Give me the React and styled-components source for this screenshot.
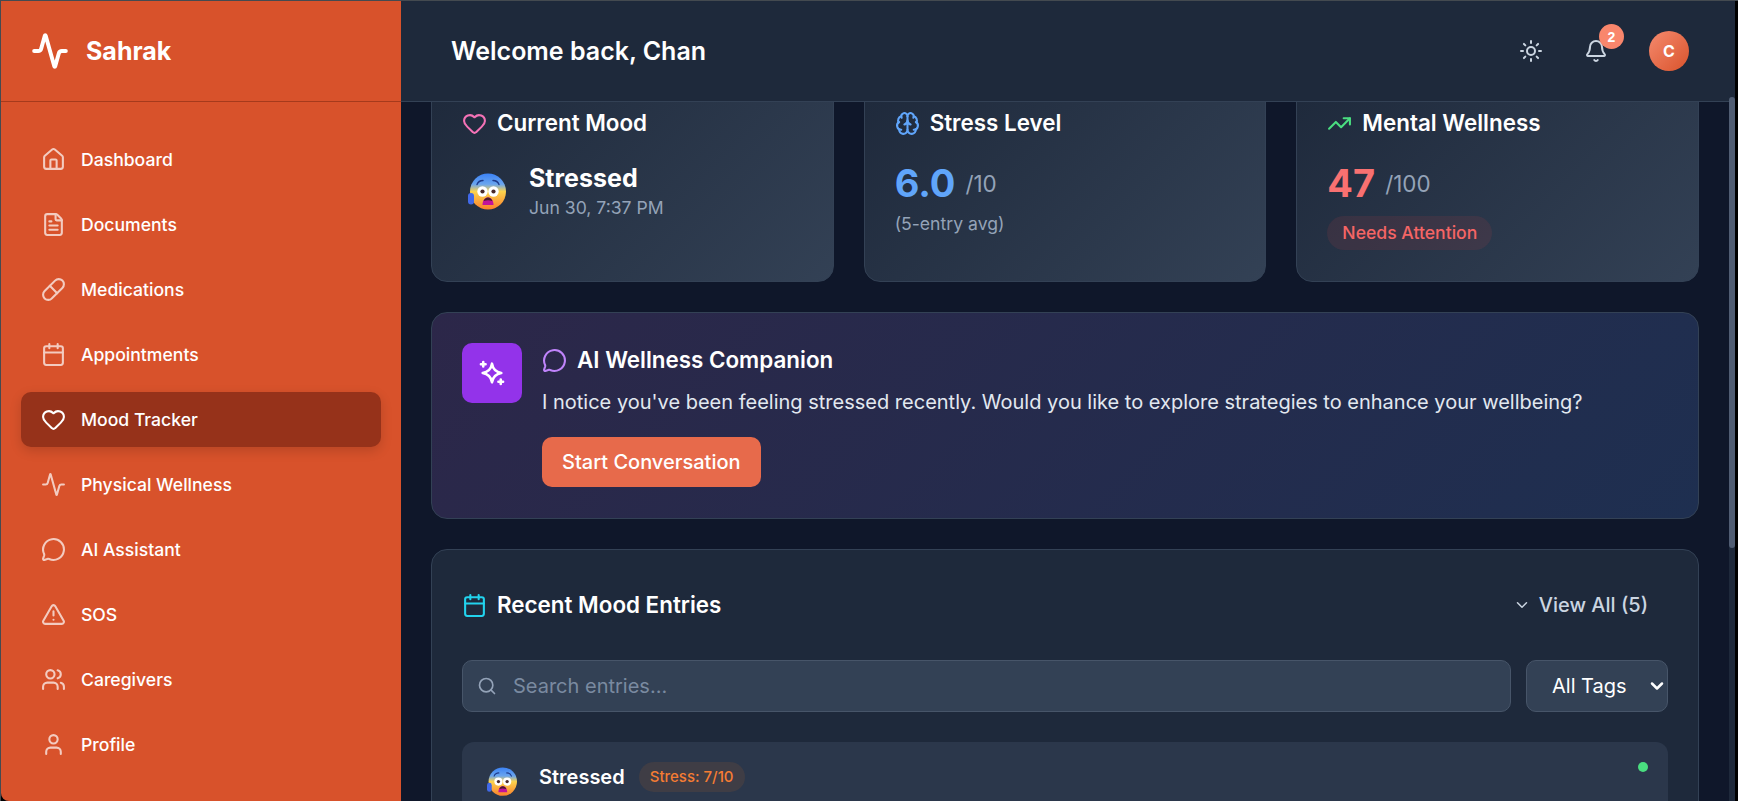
import React, { useLayoutEffect, useRef } from 'react';
import styled, { createGlobalStyle } from 'styled-components';
import {
  Activity, House, FileText, Pill, Calendar, Heart, MessageCircle, TriangleAlert,
  Users, User, Sun, Bell, Brain, TrendingUp, Search, ChevronDown,
} from 'lucide-react';

const GlobalStyle = createGlobalStyle`
  * { box-sizing: border-box; }
  html, body { margin: 0; height: 100%; overflow: hidden; background: #000; }
  body { font-family: Inter, "Noto Sans", sans-serif; color: #fff; }
`;

const Frame = styled.div`
  width: 1738px;
  height: 801px;
  padding-right: 3px;
  border-top: 1px solid #444a50;
  border-left: 1px solid #444a50;
  background: #000;
`;

const Shell = styled.div`
  display: flex;
  height: 800px;
  overflow: hidden;
  border-bottom-left-radius: 8px;
  background: #0f172a;
`;

const Sidebar = styled.aside`
  width: 400px;
  flex: none;
  background: #d8522b;
`;

const Brand = styled.div`
  display: flex;
  align-items: center;
  gap: 17px;
  height: 101px;
  padding: 0 30px;
  border-bottom: 1px solid #a63a1c;
  font-size: 25px;
  font-weight: 700;
`;

const Nav = styled.nav`
  display: flex;
  flex-direction: column;
  gap: 10px;
  padding: 30px 20px;
`;

const NavItem = styled.a`
  display: flex;
  align-items: center;
  gap: 15px;
  height: 55px;
  padding: 0 20px;
  border-radius: 10px;
  font-size: 17.6px;
  font-weight: 500;
  color: #fff;
  background: ${(p) => (p.$active ? '#96321a' : 'transparent')};
  box-shadow: ${(p) => (p.$active ? '0 4px 12px rgba(0,0,0,.15)' : 'none')};
  svg { opacity: ${(p) => (p.$active ? 1 : 0.7)}; flex: none; }
`;

const Column = styled.div`
  flex: 1;
  min-width: 0;
  height: 800px;
  overflow: hidden;
`;

const ScrollRail = styled.div`
  flex: none;
  width: 6px;
  padding-top: 96px;
  background: #1e293b;
`;

const ScrollThumb = styled.div`
  height: 451px;
  border-radius: 3px;
  background: #505d73;
`;

const Header = styled.header`
  position: sticky;
  top: 0;
  z-index: 5;
  display: flex;
  align-items: center;
  justify-content: space-between;
  height: 101px;
  padding: 0 40px 0 50px;
  background: #1e293b;
  border-bottom: 1px solid #334155;
`;

const Welcome = styled.h2`
  margin: 0;
  font-size: 25px;
  font-weight: 600;
`;

const HeaderTools = styled.div`
  display: flex;
  align-items: center;
  gap: 25px;
`;

const IconButton = styled.button`
  position: relative;
  display: flex;
  align-items: center;
  justify-content: center;
  width: 40px;
  height: 40px;
  padding: 0;
  border: 0;
  background: transparent;
  color: #cbd5e1;
`;

const Badge = styled.span`
  position: absolute;
  top: -7px;
  left: 23px;
  display: flex;
  align-items: center;
  justify-content: center;
  width: 25px;
  height: 25px;
  border-radius: 50%;
  background: #f9866c;
  color: #fff;
  font-size: 14px;
  font-weight: 600;
`;

const Avatar = styled.div`
  display: flex;
  align-items: center;
  justify-content: center;
  width: 40px;
  height: 40px;
  margin-left: 8px;
  border-radius: 50%;
  background: linear-gradient(135deg, #f58a6e, #d9532c);
  font-size: 16px;
  font-weight: 700;
`;

const Main = styled.main`
  min-height: 900px;
  padding: 30px;
  background: #0f172a;
`;

const CardRow = styled.div`
  display: grid;
  grid-template-columns: repeat(3, 1fr);
  gap: 30px;
  margin-bottom: 30px;
`;

const StatCard = styled.section`
  height: 204px;
  padding: 30px;
  border: 1px solid #334155;
  border-radius: 16px;
  background: linear-gradient(135deg, #1e293b, #334155);
`;

const CardTitle = styled.h3`
  display: flex;
  align-items: center;
  gap: 10px;
  margin: 0;
  font-size: 22.4px;
  line-height: 28px;
  font-weight: 600;
  color: #fff;
  svg { flex: none; }
`;

const MoodRow = styled.div`
  display: flex;
  align-items: center;
  gap: 23px;
  margin: 26px 0 0 6px;
`;

const MoodName = styled.div`
  font-size: 25px;
  line-height: 30px;
  font-weight: 700;
`;

const MoodDate = styled.div`
  margin-top: 3px;
  font-size: 17.6px;
  line-height: 24px;
  color: #94a3b8;
`;

const Score = styled.div`
  display: flex;
  align-items: center;
  gap: 10px;
  margin-top: 23px;
  height: 46px;
  font-size: 38px;
  line-height: 46px;
  font-weight: 700;
  color: ${(p) => p.$color};
  small { margin-top: 1px; font-size: 22.4px; font-weight: 400; color: #94a3b8; }
`;

const ScoreNote = styled.div`
  margin-top: 6px;
  font-size: 17.6px;
  line-height: 24px;
  color: #94a3b8;
`;

const AttentionPill = styled.span`
  display: inline-block;
  margin-top: 10px;
  padding: 0 15px;
  height: 34px;
  border-radius: 17px;
  background: rgba(239, 68, 68, 0.1);
  color: #f56565;
  font-size: 17.6px;
  line-height: 34px;
  font-weight: 500;
`;

const CompanionCard = styled.section`
  display: flex;
  gap: 20px;
  height: 207px;
  padding: 30px;
  margin-bottom: 30px;
  border: 1px solid #334155;
  border-radius: 16px;
  background: linear-gradient(135deg, #2c2749, #1e2f50);
`;

const SparkBox = styled.div`
  display: flex;
  align-items: center;
  justify-content: center;
  flex: none;
  width: 60px;
  height: 60px;
  border-radius: 10px;
  background: #9333ea;
`;

const CompanionBody = styled.div`
  padding-top: 3px;
`;

const CompanionText = styled.p`
  margin: 13px 0 20px;
  font-size: 20px;
  line-height: 30px;
  color: #e2e8f0;
`;

const StartButton = styled.button`
  height: 50px;
  padding: 0 20px;
  border: 0;
  border-radius: 10px;
  background: #e76a4b;
  color: #fff;
  font-family: inherit;
  font-size: 20px;
  font-weight: 500;
`;

const EntriesCard = styled.section`
  padding: 30px;
  border: 1px solid #334155;
  border-radius: 16px;
  background: #1e293b;
`;

const EntriesHead = styled.div`
  display: flex;
  align-items: center;
  justify-content: space-between;
  height: 50px;
  margin-bottom: 30px;
`;

const ViewAll = styled.button`
  display: flex;
  align-items: center;
  gap: 8px;
  padding: 0 20px;
  border: 0;
  background: transparent;
  color: #cbd5e1;
  font-family: inherit;
  font-size: 20px;
  font-weight: 500;
`;

const FilterRow = styled.div`
  display: flex;
  gap: 15px;
  margin-bottom: 30px;
`;

const SearchBox = styled.label`
  display: flex;
  align-items: center;
  gap: 14px;
  flex: 1;
  height: 52px;
  padding: 0 14px;
  border: 1px solid #475569;
  border-radius: 10px;
  background: #334155;
  color: #94a3b8;
`;

const SearchInput = styled.input`
  flex: 1;
  border: 0;
  outline: 0;
  background: transparent;
  color: #fff;
  font-family: inherit;
  font-size: 20px;
  &::placeholder { color: #7a8aa0; opacity: 1; }
`;

const SelectWrap = styled.div`
  position: relative;
  flex: none;
  width: 142px;
  height: 52px;
  svg {
    position: absolute;
    top: 16px;
    right: 1px;
    color: #fff;
    pointer-events: none;
  }
`;

const TagSelect = styled.select`
  width: 100%;
  height: 100%;
  padding: 0 0 0 25px;
  border: 1px solid #475569;
  border-radius: 10px;
  appearance: none;
  background: #334155;
  color: #fff;
  font-family: inherit;
  font-size: 20px;
`;

const EntryRow = styled.article`
  display: flex;
  align-items: flex-start;
  gap: 22px;
  min-height: 120px;
  padding: 20px 20px 20px 25px;
  border-radius: 12px;
  background: #2b374b;
`;

const EntryBody = styled.div`
  flex: 1;
`;

const EntryTop = styled.div`
  display: flex;
  align-items: center;
  gap: 14px;
  height: 30px;
  font-size: 20px;
  font-weight: 600;
`;

const StressPill = styled.span`
  height: 30px;
  padding: 0 11px;
  border-radius: 15px;
  background: rgba(249, 115, 22, 0.1);
  color: #f57c33;
  font-size: 15px;
  line-height: 30px;
  font-weight: 500;
`;

const Dot = styled.span`
  flex: none;
  width: 10px;
  height: 10px;
  border-radius: 50%;
  background: #4ade80;
`;

const EmojiSvg = styled.svg`
  flex: none;
  margin-top: ${(p) => p.$top || 0}px;
`;

const navItems = [
  ['Dashboard', House], ['Documents', FileText], ['Medications', Pill], ['Appointments', Calendar],
  ['Mood Tracker', Heart], ['Physical Wellness', Activity], ['AI Assistant', MessageCircle],
  ['SOS', TriangleAlert], ['Caregivers', Users], ['Profile', User],
];

// the stressed face is an emoji in the picture, no emoji font here so it is drawn
const FearEmoji = ({ size, top }) => (
  <EmojiSvg width={size} height={size} viewBox="0 0 38 38" $top={top}>
    <defs>
      <linearGradient id="faceFill" x1="0" y1="0" x2="0" y2="1">
        <stop offset="0" stopColor="#3b82f6" />
        <stop offset="0.3" stopColor="#6aa5ee" />
        <stop offset="0.5" stopColor="#fcd34d" />
        <stop offset="1" stopColor="#fb7f2c" />
      </linearGradient>
    </defs>
    <circle cx="20" cy="18.5" r="18" fill="url(#faceFill)" />
    <path d="M9 11.500c1-2.600 3.400-4 6-4M31 11.500c-1-2.600-3.400-4-6-4" stroke="#1e3a8a" strokeWidth="1.4" fill="none" strokeLinecap="round" />
    <circle cx="14.500" cy="18.500" r="5.200" fill="#fff" />
    <circle cx="25.500" cy="18.500" r="5.200" fill="#fff" />
    <circle cx="14.500" cy="18.500" r="2.100" fill="#4a2a2a" />
    <circle cx="25.500" cy="18.500" r="2.100" fill="#4a2a2a" />
    <path d="M14.500 32c0-5 2.500-7.500 5.500-7.500s5.500 2.500 5.500 7.500z" fill="#c2139b" />
    <path d="M15.600 28c.8-2.300 2.400-3.500 4.400-3.500s3.600 1.200 4.400 3.500c-2.800-1-6-1-8.800 0z" fill="#4a1a2a" />
    <rect x="0" y="20" width="6" height="11.500" rx="3" fill="#4169e8" />
  </EmojiSvg>
);

const SparkIcon = () => (
  <svg width="28" height="28" viewBox="0 0 24 24" fill="none" stroke="#fff" strokeWidth="2.2" strokeLinecap="round" strokeLinejoin="round">
    <path d="M12 4c.8 5 3 7.200 8 8-5 .8-7.200 3-8 8-.8-5-3-7.200-8-8 5-.8 7.200-3 8-8z" />
    <path d="M4.500 2.500v4M2.500 4.500h4M19.500 17.500v4M17.500 19.500h4" />
  </svg>
);

export default function App() {
  const columnRef = useRef(null);

  useLayoutEffect(() => {
    columnRef.current.scrollTop = 54;
  }, []);

  return (
    <Frame>
      <GlobalStyle />
      <Shell>
        <Sidebar>
          <Brand>
            <Activity size={38} strokeWidth={2.5} />
            Sahrak
          </Brand>
          <Nav>
            {navItems.map(([label, Icon]) => (
              <NavItem key={label} $active={label === 'Mood Tracker'}>
                <Icon size={25} />
                {label}
              </NavItem>
            ))}
          </Nav>
        </Sidebar>
        <Column ref={columnRef}>
          <Header>
            <Welcome>Welcome back, Chan</Welcome>
            <HeaderTools>
              <IconButton><Sun size={24} /></IconButton>
              <IconButton>
                <Bell size={24} />
                <Badge>2</Badge>
              </IconButton>
              <Avatar>C</Avatar>
            </HeaderTools>
          </Header>
          <Main>
            <CardRow>
              <StatCard>
                <CardTitle><Heart size={25} color="#f472b6" />Current Mood</CardTitle>
                <MoodRow>
                  <FearEmoji size={38} />
                  <div>
                    <MoodName>Stressed</MoodName>
                    <MoodDate>Jun 30, 7:37 PM</MoodDate>
                  </div>
                </MoodRow>
              </StatCard>
              <StatCard>
                <CardTitle><Brain size={25} color="#60a5fa" />Stress Level</CardTitle>
                <Score $color="#60a5fa">6.0 <small>/10</small></Score>
                <ScoreNote>(5-entry avg)</ScoreNote>
              </StatCard>
              <StatCard>
                <CardTitle><TrendingUp size={25} color="#4ade80" />Mental Wellness</CardTitle>
                <Score $color="#f87171">47 <small>/100</small></Score>
                <AttentionPill>Needs Attention</AttentionPill>
              </StatCard>
            </CardRow>
            <CompanionCard>
              <SparkBox><SparkIcon /></SparkBox>
              <CompanionBody>
                <CardTitle><MessageCircle size={25} color="#c084fc" />AI Wellness Companion</CardTitle>
                <CompanionText>
                  I notice you've been feeling stressed recently. Would you like to explore strategies to enhance your wellbeing?
                </CompanionText>
                <StartButton>Start Conversation</StartButton>
              </CompanionBody>
            </CompanionCard>
            <EntriesCard>
              <EntriesHead>
                <CardTitle><Calendar size={25} color="#22d3ee" />Recent Mood Entries</CardTitle>
                <ViewAll><ChevronDown size={18} />View All (5)</ViewAll>
              </EntriesHead>
              <FilterRow>
                <SearchBox>
                  <Search size={20} />
                  <SearchInput placeholder="Search entries..." />
                </SearchBox>
                <SelectWrap>
                  <TagSelect defaultValue="all">
                    <option value="all">All Tags</option>
                  </TagSelect>
                  <ChevronDown size={20} strokeWidth={3} />
                </SelectWrap>
              </FilterRow>
              <EntryRow>
                <FearEmoji size={30} top={5} />
                <EntryBody>
                  <EntryTop>
                    Stressed
                    <StressPill>Stress: 7/10</StressPill>
                  </EntryTop>
                </EntryBody>
                <Dot />
              </EntryRow>
            </EntriesCard>
          </Main>
        </Column>
        <ScrollRail><ScrollThumb /></ScrollRail>
      </Shell>
    </Frame>
  );
}
